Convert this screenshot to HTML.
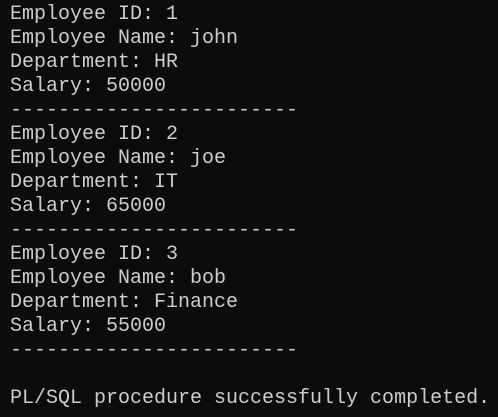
<!DOCTYPE html>
<html><head><meta charset="utf-8"><style>
html,body{margin:0;padding:0;background:#0c0c0c;width:498px;height:417px;overflow:hidden}
pre{margin:0;padding:3px 0 0 10px;font-family:"Liberation Mono",monospace;font-size:20px;line-height:24px;color:#cccccc;white-space:pre}
</style></head><body><pre>Employee ID: 1
Employee Name: john
Department: HR
Salary: 50000
------------------------
Employee ID: 2
Employee Name: joe
Department: IT
Salary: 65000
------------------------
Employee ID: 3
Employee Name: bob
Department: Finance
Salary: 55000
------------------------

PL/SQL procedure successfully completed.</pre></body></html>
